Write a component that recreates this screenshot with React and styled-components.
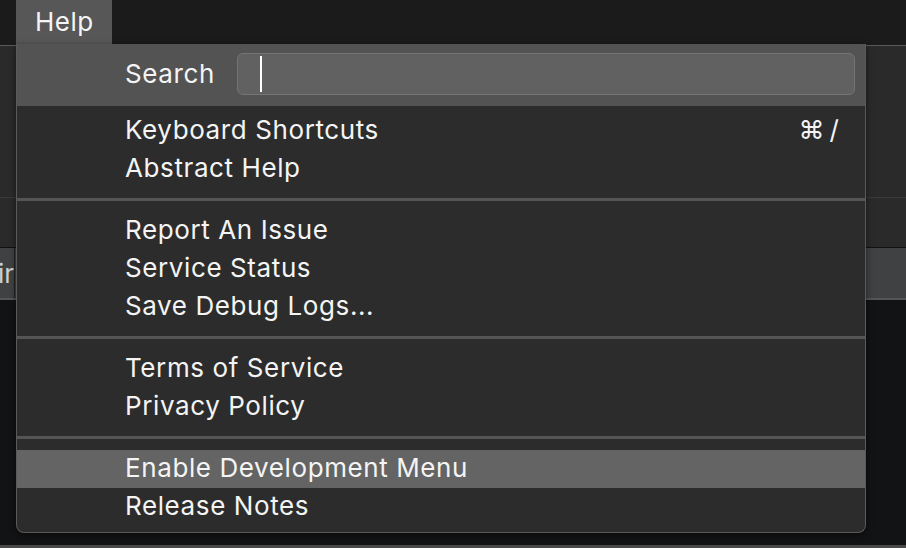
import styled, { createGlobalStyle } from "styled-components"

const GlobalStyle = createGlobalStyle`
    *, *::before, *::after {
        box-sizing: border-box;
    }
    html, body {
        margin: 0;
        padding: 0;
        background: #121314;
        overflow: hidden;
    }
    body {
        font-family: "Inter", "Liberation Sans", sans-serif;
        -webkit-font-smoothing: antialiased;
    }
`

const groups = [
    [
        { label: "Keyboard Shortcuts", shortcut: "⌘/" },
        { label: "Abstract Help" },
    ],
    [
        { label: "Report An Issue" },
        { label: "Service Status" },
        { label: "Save Debug Logs..." },
    ],
    [
        { label: "Terms of Service" },
        { label: "Privacy Policy" },
    ],
    [
        { label: "Enable Development Menu", active: true },
        { label: "Release Notes" },
    ],
]

export default function App(){
    return (
        <Page>
            <GlobalStyle />
            <MenuBar>
                <MenuTitle>Help</MenuTitle>
            </MenuBar>
            <Toolbar />
            <Row />
            <Strip>
                <StripCell><span>Pair</span></StripCell>
            </Strip>
            <Canvas />
            <Footer />

            <Dropdown>
                <SearchRow>
                    <SearchLabel>Search</SearchLabel>
                    <SearchBox>
                        <Caret />
                    </SearchBox>
                </SearchRow>
                <Items>
                    {groups.map((group, i) => (
                        <Group key={i}>
                            {i > 0 && <Separator />}
                            {group.map(item => (
                                <Item key={item.label} $active={item.active}>
                                    <span>{item.label}</span>
                                    {item.shortcut && <Shortcut>{item.shortcut}</Shortcut>}
                                </Item>
                            ))}
                        </Group>
                    ))}
                </Items>
            </Dropdown>
        </Page>
    )
}

const Page = styled.div`
    position: relative;
    width: 906px;
    height: 548px;
    display: flex;
    flex-direction: column;
    overflow: hidden;
`
const MenuBar = styled.div`
    height: 45px;
    flex: none;
    background: #1b1b1b;
    display: flex;
    align-items: flex-start;
    padding-left: 16px;
`
const MenuTitle = styled.div`
    height: 44px;
    padding: 0 18px 0 19px;
    background: #575757;
    color: #f4f4f4;
    font-size: 26px;
    letter-spacing: 0.5px;
    line-height: 43px;
`
const Toolbar = styled.div`
    height: 153px;
    flex: none;
    background: #2a2a2a;
    border-top: 1px solid #5a5a5a;
    border-bottom: 1px solid #3a3a3a;
`
const Row = styled.div`
    height: 50px;
    flex: none;
    background: #2a2a2a;
    border-bottom: 1px solid #111;
`
const Strip = styled.div`
    height: 52px;
    flex: none;
    background: #404142;
    border-bottom: 2px solid #555;
    display: flex;
`
const StripCell = styled.div`
    width: 15px;
    overflow: hidden;
    display: flex;
    justify-content: flex-end;
    align-items: center;
    color: #d0d0d0;
    font-size: 26px;
    white-space: nowrap;
    border-right: 1px solid #222;
`
const Canvas = styled.div`
    flex: 1;
    background: #121314;
`
const Footer = styled.div`
    height: 3px;
    flex: none;
    background: #4a4a4a;
`
const Dropdown = styled.div`
    position: absolute;
    left: 16px;
    top: 44px;
    width: 850px;
    background: #2c2c2c;
    border: 1px solid #5a5a5a;
    border-top: none;
    border-radius: 0 0 8px 8px;
    box-shadow: 0 2px 6px rgba(0, 0, 0, 0.5);
    overflow: hidden;
    color: #f4f4f4;
    font-size: 26px;
    letter-spacing: 0.6px;
`
const SearchRow = styled.div`
    height: 62px;
    background: #535353;
    display: flex;
    align-items: center;
    padding: 0 10px 2px 108px;
`
const SearchLabel = styled.div`
    width: 112px;
    padding-bottom: 2px;
`
const SearchBox = styled.div`
    flex: 1;
    height: 42px;
    background: #616161;
    border: 1px solid #747474;
    border-radius: 6px;
    display: flex;
    align-items: center;
    padding-left: 22px;
`
const Caret = styled.div`
    width: 2px;
    height: 36px;
    background: #fff;
`
const Items = styled.div`
    padding: 6px 0 6px;
`
const Group = styled.div`
    display: flex;
    flex-direction: column;
`
const Separator = styled.div`
    height: 3px;
    margin: 10px 0 11px;
    background: #555;
`
const Item = styled.div`
    height: 38px;
    display: flex;
    align-items: center;
    justify-content: space-between;
    padding: 0 27px 3px 108px;
    background: ${p => p.$active ? "#646464" : "transparent"};
`
const Shortcut = styled.span`
    letter-spacing: 5px;
    margin-right: -6px;
`
